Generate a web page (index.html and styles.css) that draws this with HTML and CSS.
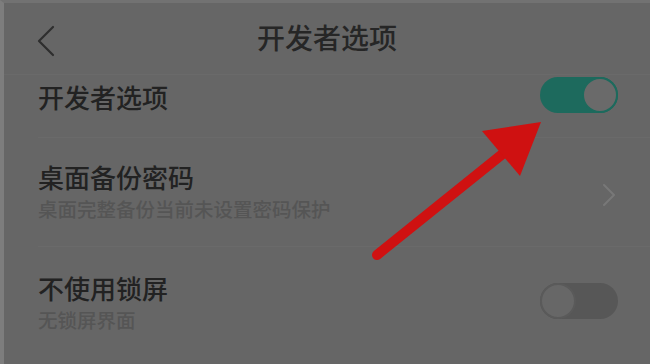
FILE: index.html
```html
<!DOCTYPE html>
<html lang="zh-CN">
<head>
<meta charset="utf-8">
<title>开发者选项</title>
<link rel="stylesheet" href="styles.css">
</head>
<body>
<div class="screen">
  <header class="header">
    <div class="back">
      <svg width="20" height="32" viewBox="0 0 20 32"><path d="M17 2 L3 16 L17 30" fill="none" stroke="#2e2e2e" stroke-width="2.2" stroke-linecap="round" stroke-linejoin="round"/></svg>
    </div>
    <div class="title">开发者选项</div>
    <div></div>
  </header>
  <div class="list">
    <div class="row row-first">
      <div class="row-inner">
        <div class="texts"><div class="label">开发者选项</div></div>
        <div class="toggle on"><span class="knob"></span></div>
      </div>
    </div>
    <div class="row row-tall">
      <div class="row-inner">
        <div class="texts">
          <div class="label">桌面备份密码</div>
          <div class="sub">桌面完整备份当前未设置密码保护</div>
        </div>
        <svg class="arrow-right" width="14" height="22" viewBox="0 0 14 22"><path d="M2 1 L12 11 L2 21" fill="none" stroke="#787878" stroke-width="2" stroke-linecap="round" stroke-linejoin="round"/></svg>
      </div>
    </div>
    <div class="row row-last">
      <div class="row-inner">
        <div class="texts">
          <div class="label">不使用锁屏</div>
          <div class="sub">无锁屏界面</div>
        </div>
        <div class="toggle off"><span class="knob"></span></div>
      </div>
    </div>
  </div>
  <svg class="annotation" width="650" height="364" viewBox="0 0 650 364">
    <line x1="377" y1="255" x2="505" y2="152" stroke="#cf1111" stroke-width="10" stroke-linecap="round"/>
    <polygon points="541,122 482,131 520,176" fill="#cf1111"/>
  </svg>
</div>
</body>
</html>
```

FILE: styles.css
```css
* { box-sizing: border-box; }
html, body { margin: 0; padding: 0; }
body {
  width: 650px;
  height: 364px;
  overflow: hidden;
  background: #666666;
  font-family: "Noto Sans CJK SC", "Noto Sans", sans-serif;
}
.screen {
  position: relative;
  width: 650px;
  height: 364px;
  border-left: 4px solid #7d7d7d;
  border-top: 3px solid #727272;
  background: #666666;
  display: flex;
  flex-direction: column;
}
.header {
  height: 72px;
  display: grid;
  grid-template-columns: 1fr auto 1fr;
  align-items: center;
  border-bottom: 1px solid #6a6a6a;
}
.back {
  padding-left: 32px;
  padding-top: 4px;
  display: flex;
  align-items: center;
}
.title {
  font-size: 28px;
  line-height: 36px;
  color: #262626;
  font-weight: 500;
  margin-top: -4px;
}
.list { display: flex; flex-direction: column; flex: 1; }
.row { padding-left: 34px; }
.row-inner {
  display: flex;
  justify-content: space-between;
  padding-right: 32px;
  border-bottom: 1px solid #6a6a6a;
}
.row-first .row-inner { height: 63px; align-items: flex-start; padding-top: 5px; }
.row-tall .row-inner { height: 109px; align-items: center; padding-top: 0; }
.row-last .row-inner { height: 116px; align-items: flex-start; padding-top: 24px; border-bottom: none; }
.label {
  font-size: 26px;
  line-height: 34px;
  font-weight: 500;
  color: #222222;
}
.sub {
  font-size: 19.5px;
  line-height: 26px;
  margin-top: 2px;
  font-weight: 500;
  color: #555555;
}
.row-tall .texts { margin-top: -2px; }
.toggle {
  position: relative;
  width: 78px;
  height: 36px;
  border-radius: 18px;
}
.toggle.on { background: #1d6a5d; margin-top: -3px; }
.toggle.off { background: #575757; margin-top: 12px; }
.knob {
  position: absolute;
  top: 0;
  width: 36px;
  height: 36px;
  border-radius: 50%;
}
.toggle.on .knob { right: 0; background: #6a6a6a; border: 2px solid #1d6a5d; }
.toggle.off .knob { left: 0; background: #676767; border: 2px solid #5a5a5a; }
.arrow-right { margin-right: 2px; margin-top: 6px; }
.annotation {
  position: absolute;
  left: -4px;
  top: -3px;
  pointer-events: none;
}
```
